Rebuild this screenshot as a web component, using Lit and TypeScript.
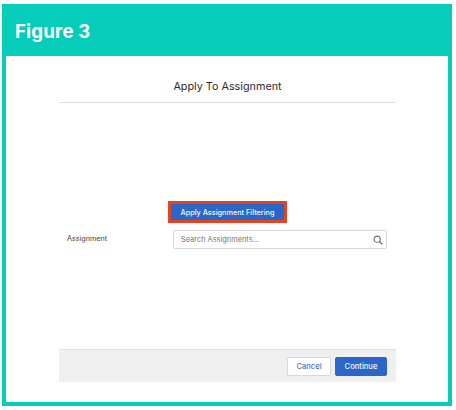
import { LitElement, html, css } from "lit";
import { customElement } from "lit/decorators.js";

@customElement("app-root")
export class AppRoot extends LitElement {
  static styles = css`
    :host {
      display: block;
      width: 456px;
      height: 410px;
      box-sizing: border-box;
      padding: 4px 4px 4px 2px;
      background: #fff;
      font-family: "Inter", "Liberation Sans", sans-serif;
      overflow: hidden;
    }
    .frame {
      height: 100%;
      box-sizing: border-box;
      border: 4px solid #05cdb9;
      border-top: 0;
      display: flex;
      flex-direction: column;
    }
    .banner {
      height: 52px;
      flex: none;
      margin: 0 -4px;
      background: #05cdb9;
      color: #fff;
      display: flex;
      align-items: center;
      padding: 2px 0 0 13px;
      box-sizing: border-box;
      font-size: 18.6px;
      font-weight: 700;
      letter-spacing: 0.2px;
    }
    .modal {
      flex: 1;
      margin: 0 52px 20px 53px;
      display: flex;
      flex-direction: column;
    }
    .head {
      height: 47px;
      flex: none;
      box-sizing: border-box;
      border-bottom: 1px solid #dddddd;
      display: flex;
      align-items: center;
      justify-content: center;
      padding-top: 14px;
      font-size: 10.8px;
      color: #2b2b2b;
    }
    .body {
      flex: 1;
      display: flex;
      flex-direction: column;
      padding-top: 98px;
    }
    .filter {
      margin-left: 109px;
      width: 119px;
      height: 22px;
      box-sizing: border-box;
      border: 3px solid #e8431f;
      background: #2b67c9;
      color: #f4f7fd;
      font: 500 7.3px "Inter", "Liberation Sans", sans-serif;
      display: flex;
      align-items: center;
      justify-content: center;
      padding: 0;
    }
    .row {
      display: flex;
      align-items: center;
      margin-top: 7px;
      padding-left: 8px;
    }
    .label {
      width: 106px;
      flex: none;
      font-size: 7.2px;
      color: #3e3e3c;
      padding-bottom: 3px;
    }
    .search {
      width: 214px;
      height: 19px;
      box-sizing: border-box;
      border: 1px solid #d6d6d6;
      border-radius: 2px;
      background: #fff;
      display: flex;
      align-items: center;
      justify-content: space-between;
      padding: 0 3px 0 7px;
      font-size: 7.4px;
      color: #757575;
    }
    .search svg {
      display: block;
    }
    .foot {
      height: 33px;
      flex: none;
      box-sizing: border-box;
      background: #efefef;
      border-top: 1px solid #e2e2e2;
      display: flex;
      align-items: center;
      justify-content: flex-end;
      gap: 4px;
      padding-right: 9px;
    }
    .btn {
      height: 19px;
      box-sizing: border-box;
      border-radius: 2px;
      font: 500 7.6px "Inter", "Liberation Sans", sans-serif;
      display: flex;
      align-items: center;
      justify-content: center;
      padding: 0;
    }
    .cancel {
      width: 44px;
      background: #fff;
      border: 1px solid #d8d8d8;
      color: #3f72cf;
    }
    .continue {
      width: 52px;
      background: #2b67c9;
      border: 1px solid #2b67c9;
      color: #f4f7fd;
    }
  `;

  render() {
    return html`
      <div class="frame">
        <div class="banner">Figure 3</div>
        <div class="modal">
          <div class="head">Apply To Assignment</div>
          <div class="body">
            <button class="filter">Apply Assignment Filtering</button>
            <div class="row">
              <div class="label">Assignment</div>
              <div class="search">
                <span>Search Assignments...</span>
                <svg width="10" height="10" viewBox="0 0 10 10" fill="none" stroke="#6b6b6b" stroke-width="1.1">
                  <circle cx="4.2" cy="4.2" r="3.1"></circle>
                  <path d="M6.5 6.5 L9.3 9.3" stroke-width="1.4"></path>
                </svg>
              </div>
            </div>
          </div>
          <div class="foot">
            <button class="btn cancel">Cancel</button>
            <button class="btn continue">Continue</button>
          </div>
        </div>
      </div>
    `;
  }
}
